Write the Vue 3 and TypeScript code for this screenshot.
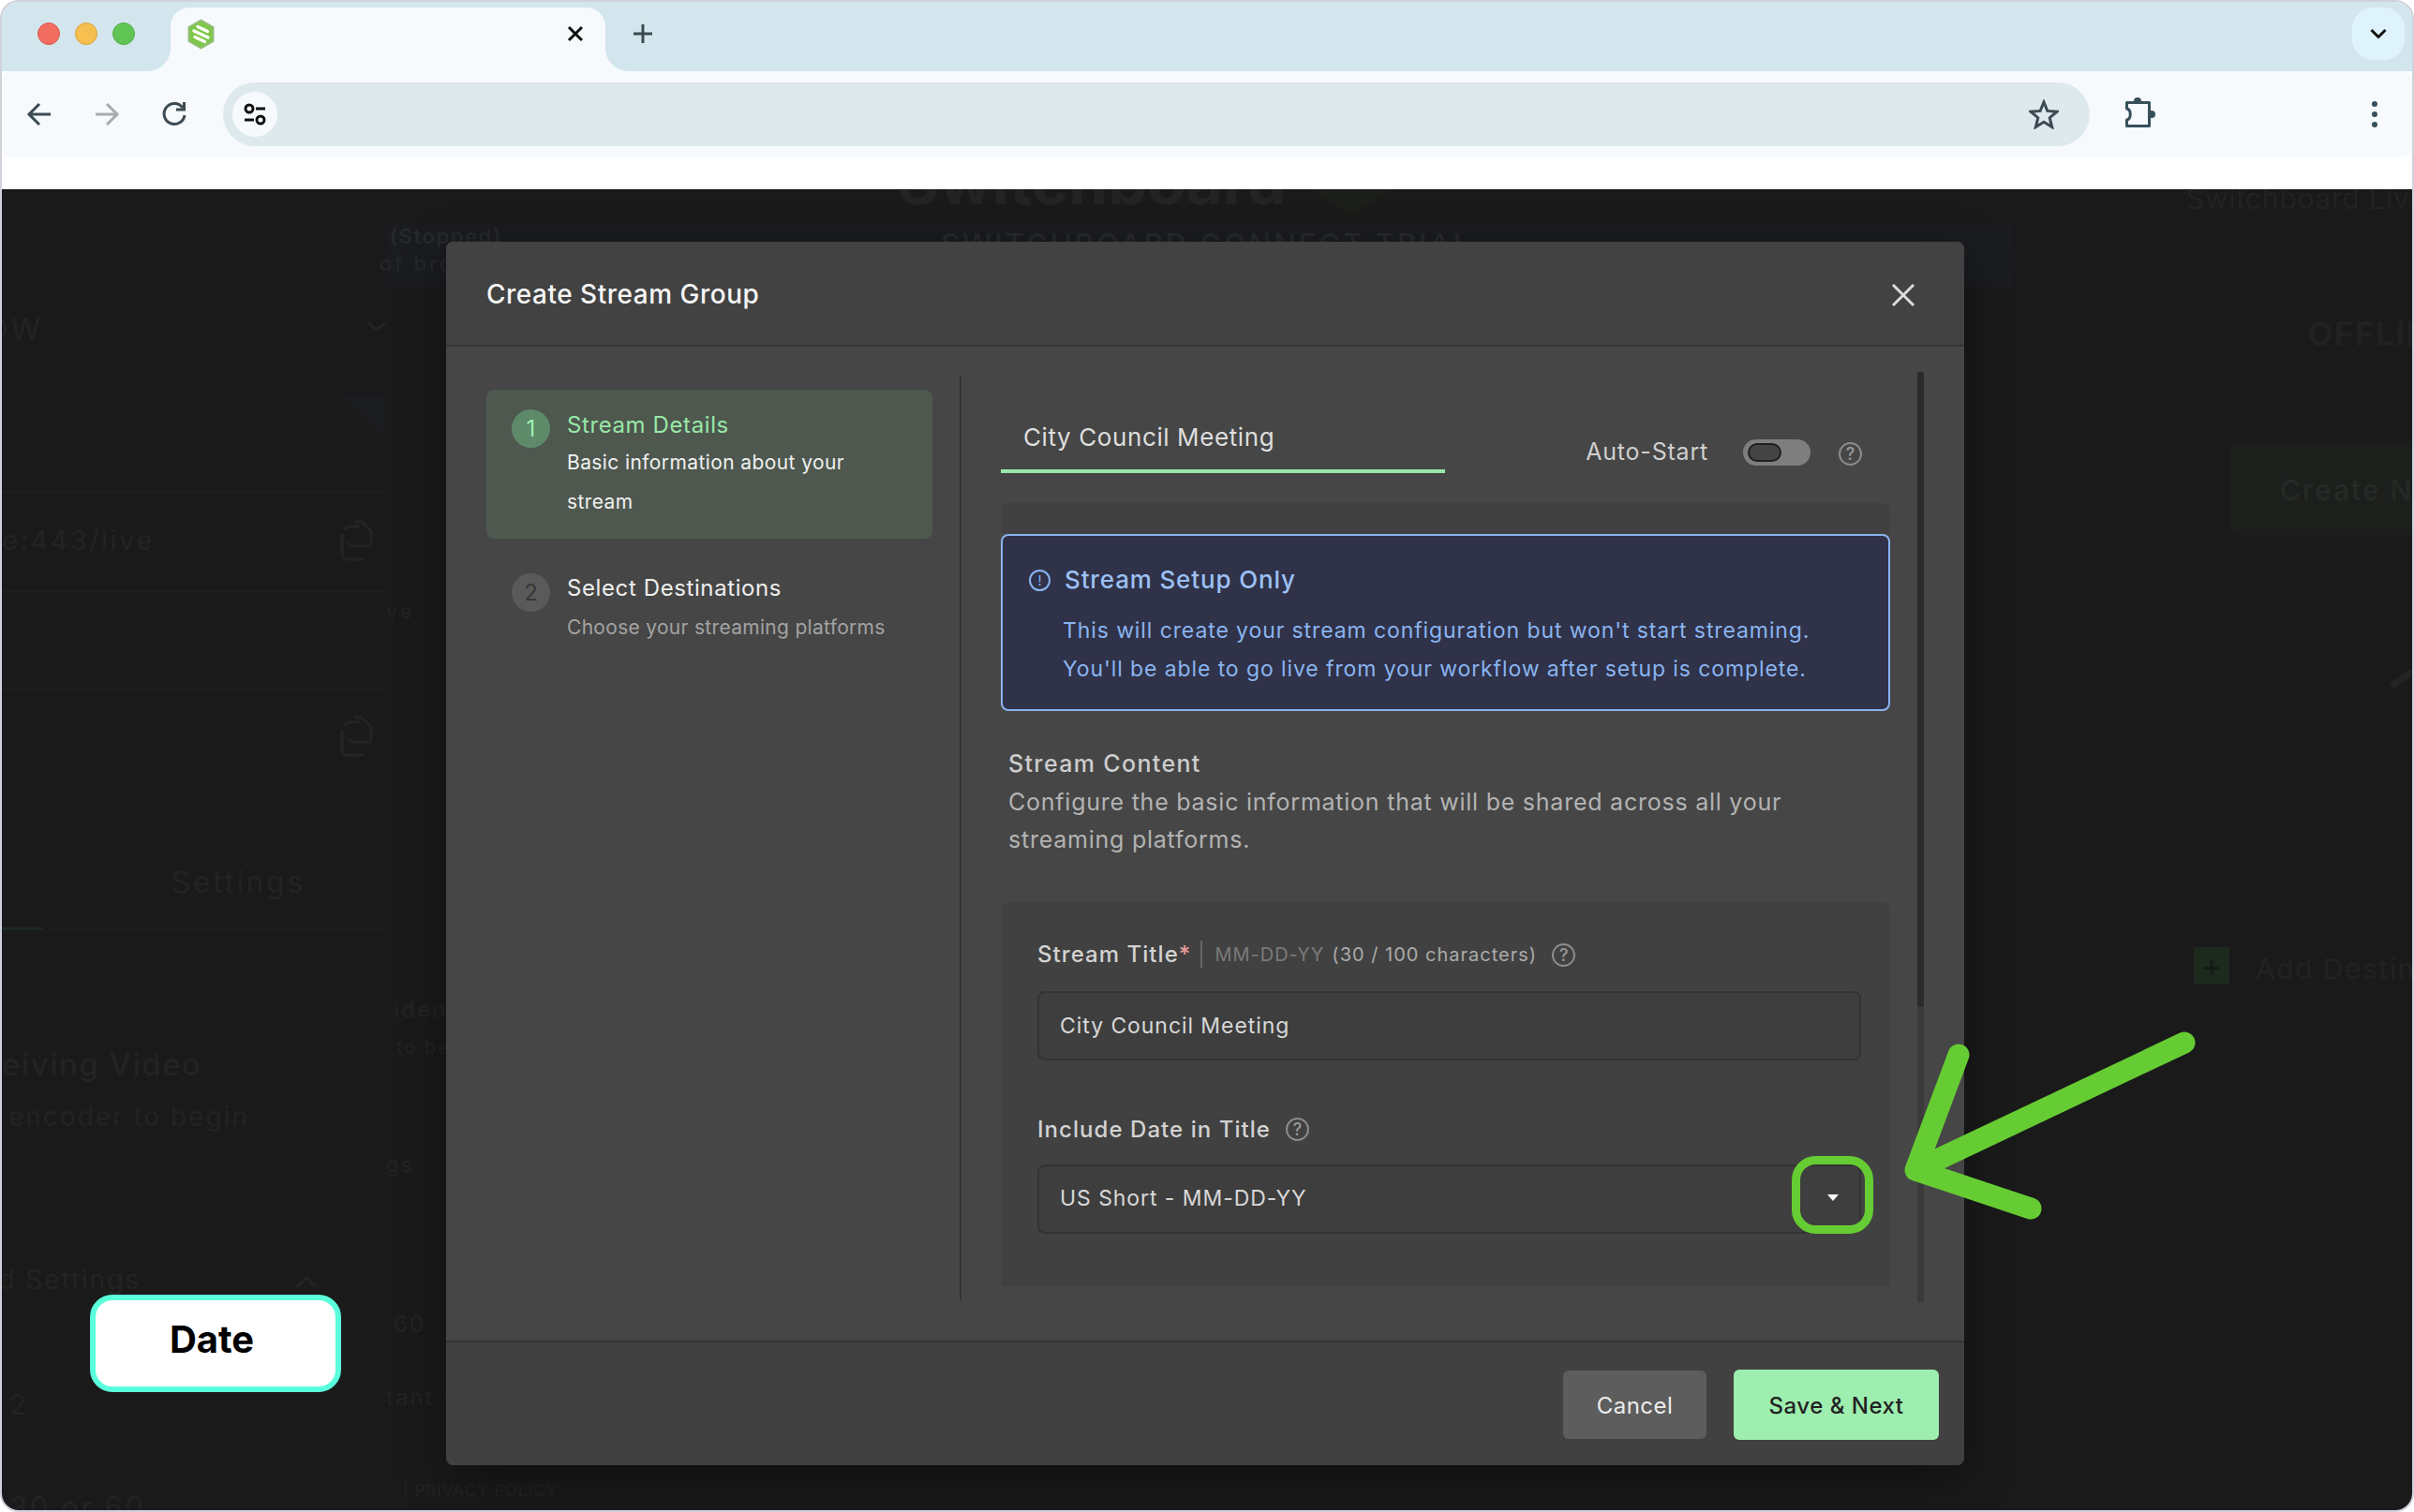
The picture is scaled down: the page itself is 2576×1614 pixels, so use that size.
<script setup lang="ts">
interface Ghost { text: string; x: number; y: number; size: number; weight?: number; color?: string; spacing?: number }
const ghosts: Ghost[] = [
  { text: 'Switchboard', x: 958, y: 194, size: 67, weight: 700, color: '#232323', spacing: 0 },
  { text: '(Stopped)', x: 416, y: 252, size: 22, weight: 600, color: '#26282c', spacing: 1.5 },
  { text: 'of broadcast', x: 405, y: 281, size: 22, color: '#26282c', spacing: 3 },
  { text: 'SWITCHBOARD CONNECT TRIAL', x: 1004, y: 261, size: 31, weight: 500, color: '#27292d', spacing: 3 },
  { text: 'Switchboard Live', x: 2333, y: 212, size: 30, weight: 300, color: '#242424', spacing: 1 },
  { text: 'OFFLINE', x: 2462, y: 356, size: 36, weight: 700, color: '#212121', spacing: 1 },
  { text: 'Create New', x: 2433, y: 523, size: 30, weight: 500, color: '#262a26', spacing: 2 },
  { text: 'Add Destination', x: 2407, y: 1034, size: 30, color: '#222222', spacing: 1.5 },
  { text: 'OW', x: -16, y: 352, size: 32, color: '#232323', spacing: 3 },
  { text: 'e:443/live', x: 2, y: 577, size: 29, color: '#232323', spacing: 2.5 },
  { text: 've', x: 412, y: 652, size: 22, color: '#232323', spacing: 3 },
  { text: 'Settings', x: 183, y: 942, size: 32, color: '#232323', spacing: 2.5 },
  { text: 'eiving Video', x: 2, y: 1136, size: 33, weight: 500, color: '#232323', spacing: 1.5 },
  { text: 'encoder to begin', x: 9, y: 1192, size: 28, color: '#232323', spacing: 2 },
  { text: 'd Settings', x: -2, y: 1366, size: 29, color: '#232323', spacing: 1.5 },
  { text: '2', x: 10, y: 1499, size: 30, color: '#232323' },
  { text: '30 or 60', x: 10, y: 1610, size: 32, color: '#232323', spacing: 2 },
  { text: 'ideo', x: 420, y: 1078, size: 24, weight: 500, color: '#232323', spacing: 2 },
  { text: 'to be', x: 423, y: 1118, size: 20, color: '#232323', spacing: 2 },
  { text: 'gs', x: 412, y: 1243, size: 22, color: '#232323', spacing: 2 },
  { text: '60', x: 420, y: 1414, size: 24, color: '#232323', spacing: 2 },
  { text: 'tant (', x: 412, y: 1492, size: 24, color: '#232323', spacing: 2 },
  { text: '| PRIVACY POLICY', x: 430, y: 1591, size: 17, color: '#232323', spacing: 1 },
]
const ghostStyle = (g: Ghost) => ({
  left: `${g.x - 2}px`,
  top: `${g.y - 202}px`,
  fontSize: `${g.size}px`,
  fontWeight: g.weight ?? 400,
  color: g.color,
  letterSpacing: `${g.spacing ?? 0}px`,
})
const rules = [524, 630, 735, 836, 992]
</script>

<template>
  <div class="window">
    <header class="tabstrip">
      <div class="lights">
        <span class="light red"></span>
        <span class="light yellow"></span>
        <span class="light green"></span>
      </div>
      <div class="tab">
        <svg class="favicon" width="29" height="33" viewBox="0 0 29 33">
          <polygon points="14.5,1.5 27.5,9 27.5,24 14.5,31.5 1.5,24 1.5,9" fill="#7fc74a" stroke="#93bd78" stroke-width="2" stroke-linejoin="round" />
          <path d="M11 8.5 L21.5 13.5 M7 13 L22 20 M8 19.5 L18.5 24.5" stroke="#fff" stroke-width="3.4" stroke-linecap="round" fill="none" />
        </svg>
        <svg class="tab-close" width="18" height="18" viewBox="0 0 18 18">
          <path d="M2 2 L16 16 M16 2 L2 16" stroke="#111" stroke-width="3" fill="none" />
        </svg>
      </div>
      <svg class="new-tab" width="22" height="22" viewBox="0 0 22 22">
        <path d="M11 1 V21 M1 11 H21" stroke="#3c4a52" stroke-width="3" fill="none" />
      </svg>
      <div class="tab-menu">
        <svg width="18" height="12" viewBox="0 0 18 12">
          <path d="M1.5 2 L9 9.5 L16.5 2" stroke="#111" stroke-width="3" fill="none" />
        </svg>
      </div>
    </header>

    <nav class="toolbar">
      <svg class="nav-icon" width="28" height="28" viewBox="0 0 28 28">
        <path d="M26 14 H4 M14 3 L3 14 L14 25" stroke="#3c4a52" stroke-width="3" fill="none" />
      </svg>
      <svg class="nav-icon" width="28" height="28" viewBox="0 0 28 28">
        <path d="M2 14 H24 M14 3 L25 14 L14 25" stroke="#a6abaf" stroke-width="3" fill="none" />
      </svg>
      <svg class="nav-icon" width="28" height="28" viewBox="0 0 28 28">
        <path d="M23 7 A11 11 0 1 0 25 15" stroke="#3c4a52" stroke-width="3" fill="none" />
        <path d="M24.5 1 V9 H16" stroke="#3c4a52" stroke-width="3" fill="none" />
      </svg>
      <div class="omnibox">
        <div class="chip">
          <svg width="26" height="26" viewBox="0 0 26 26">
            <circle cx="7" cy="7" r="4" stroke="#111" stroke-width="3" fill="none" />
            <path d="M14 7 H24 M2 19 H12" stroke="#111" stroke-width="3" fill="none" />
            <circle cx="19" cy="19" r="4" stroke="#111" stroke-width="3" fill="none" />
          </svg>
        </div>
        <svg class="star" width="32" height="32" viewBox="0 0 32 32">
          <polygon points="16,3 19.8,12.4 30,13.2 22.2,19.7 24.7,29.6 16,24.3 7.3,29.6 9.8,19.7 2,13.2 12.2,12.4" stroke="#3c4a52" stroke-width="3" fill="none" />
        </svg>
      </div>
      <svg class="puzzle" width="32" height="32" viewBox="0 0 32 32">
        <circle cx="13" cy="4" r="4" fill="#37505c" />
        <circle cx="28" cy="18" r="4" fill="#37505c" />
        <path d="M1.5 5.5 H25.5 V30.5 H1.5 V24 C6.5 23 6.5 13 1.5 12 Z" stroke="#37505c" stroke-width="3" stroke-linejoin="round" fill="#f6fafd" />
      </svg>
      <div class="dots"><i></i><i></i><i></i></div>
    </nav>

    <div class="white-strip"></div>

    <main class="stage">
      <div class="ghost-layer">
        <div class="ghost-band"></div>
        <div class="ghost-tri"></div>
        <div class="ghost-shield"></div>
        <div class="ghost-btn"></div>
        <div class="ghost-plus">+</div>
        <div class="ghost-tab"></div>
        <div v-for="r in rules" :key="r" class="ghost-rule" :style="{ top: `${r - 202}px` }"></div>
        <svg class="ghost-svg" width="2572" height="1410" viewBox="2 202 2572 1410">
          <g fill="none" stroke="#242424" stroke-width="3">
            <path d="M393 345 L402 352 L411 345" />
            <path d="M317 1374 L327 1364 L337 1374" />
            <path d="M368 566 a4 4 0 0 1 4 -4 h12 M378 557 h8 l10 10 v12 a4 4 0 0 1 -4 4 h-16 a4 4 0 0 1 -4 -4 M365 570 v22 a5 5 0 0 0 5 5 h18" />
            <path d="M368 775 a4 4 0 0 1 4 -4 h12 M378 766 h8 l10 10 v12 a4 4 0 0 1 -4 4 h-16 a4 4 0 0 1 -4 -4 M365 779 v22 a5 5 0 0 0 5 5 h18" />
            <path d="M2552 732 L2576 716" stroke-width="7" />
          </g>
        </svg>
        <span v-for="g in ghosts" :key="g.text + g.y" class="ghost-text" :style="ghostStyle(g)">{{ g.text }}</span>
      </div>

      <div class="overlay">
        <section class="modal">
          <div class="modal-head">
            <h2 class="modal-title">Create Stream Group</h2>
            <svg class="modal-close" width="28" height="28" viewBox="0 0 28 28">
              <path d="M3 3 L25 25 M25 3 L3 25" stroke="#dcdcdc" stroke-width="3" fill="none" />
            </svg>
          </div>

          <div class="modal-body">
            <aside class="stepper">
              <div class="step active">
                <span class="step-num">1</span>
                <div class="step-text">
                  <div class="step-title">Stream Details</div>
                  <div class="step-sub">Basic information about your stream</div>
                </div>
              </div>
              <div class="step idle">
                <span class="step-num">2</span>
                <div class="step-text">
                  <div class="step-title">Select Destinations</div>
                  <div class="step-sub">Choose your streaming platforms</div>
                </div>
              </div>
            </aside>
            <div class="divider"></div>

            <div class="pane">
              <div class="tab-row">
                <div class="group-tab">City Council Meeting</div>
                <div class="auto-start">
                  <span class="auto-label">Auto-Start</span>
                  <span class="toggle"><i></i></span>
                  <span class="help help-auto">?</span>
                </div>
              </div>

              <div class="strip"></div>
              <div class="alert">
                <div class="alert-head">
                  <span class="alert-icon">!</span>
                  <span class="alert-title">Stream Setup Only</span>
                </div>
                <p class="alert-body">This will create your stream configuration but won't start streaming.<br />You'll be able to go live from your workflow after setup is complete.</p>
              </div>

              <div class="section">
                <div class="section-title">Stream Content</div>
                <p class="section-text">Configure the basic information that will be shared across all your streaming platforms.</p>
              </div>

              <div class="card">
                <div class="field-label">
                  <span class="label-main">Stream Title<em>*</em></span>
                  <span class="sep"></span>
                  <span class="hint-dim">MM-DD-YY</span>
                  <span class="hint">(30 / 100 characters)</span>
                  <span class="help">?</span>
                </div>
                <div class="input">City Council Meeting</div>

                <div class="field-label second">
                  <span class="label-main">Include Date in Title</span>
                  <span class="help">?</span>
                </div>
                <div class="input select">
                  <span>US Short - MM-DD-YY</span>
                  <i class="caret"></i>
                </div>
              </div>
            </div>

            <div class="scrollbar"><i></i></div>
          </div>

          <div class="modal-foot">
            <button class="btn cancel">Cancel</button>
            <button class="btn save">Save &amp; Next</button>
          </div>
        </section>
      </div>
    </main>

    <svg class="annotation" width="2576" height="1614" viewBox="0 0 2576 1614">
      <rect x="1916.5" y="1238.5" width="78" height="74" rx="21" fill="none" stroke="#66cc33" stroke-width="9" />
      <path d="M2331 1113 L2044 1249 M2090 1126 L2044 1249 L2167 1290" fill="none" stroke="#66cc33" stroke-width="23" stroke-linecap="round" stroke-linejoin="round" />
    </svg>

    <div class="date-badge"><span>Date</span></div>
  </div>
</template>

<style>
html, body { margin: 0; background: #fff; }
</style>

<style scoped>
.window {
  position: relative;
  width: 2576px;
  height: 1614px;
  box-sizing: border-box;
  border: 2px solid #cfd2da;
  border-radius: 20px;
  overflow: hidden;
  display: flex;
  flex-direction: column;
  background: #fff;
  font-family: Inter, "Liberation Sans", sans-serif;
}

/* browser chrome */
.tabstrip {
  height: 74px;
  flex: none;
  display: flex;
  align-items: flex-start;
  background: #d3e6ed;
}
.lights { display: flex; gap: 16px; padding: 22px 0 0 38px; width: 180px; flex: none; box-sizing: border-box; }
.light { width: 24px; height: 24px; border-radius: 50%; box-sizing: border-box; }
.red { background: #f26d60; border: 1px solid #d85a50; }
.yellow { background: #f6bf4f; border: 1px solid #dca23c; }
.green { background: #61c555; border: 1px solid #4fae45; }
.tab {
  position: relative;
  margin-top: 6px;
  width: 464px;
  height: 68px;
  box-sizing: border-box;
  background: #f6fafd;
  border-radius: 20px 20px 0 0;
  display: flex;
  align-items: flex-start;
  justify-content: space-between;
  padding: 12px 23px 0 18px;
}
.tab::before, .tab::after {
  content: "";
  position: absolute;
  bottom: 0;
  width: 24px;
  height: 24px;
}
.tab::before { left: -24px; background: radial-gradient(circle at 0 0, transparent 23.5px, #f6fafd 24px); }
.tab::after { right: -24px; background: radial-gradient(circle at 100% 0, transparent 23.5px, #f6fafd 24px); }
.tab-close { margin-top: 7px; }
.new-tab { margin: 23px 0 0 29px; }
.tab-menu {
  margin: 6px 8px 0 auto;
  width: 56px;
  height: 56px;
  border-radius: 22px;
  background: #def3fc;
  display: flex;
  align-items: center;
  justify-content: center;
}
.toolbar {
  height: 92px;
  flex: none;
  display: flex;
  align-items: center;
  background: #f6fafd;
  border-radius: 10px;
  padding-left: 26px;
  box-sizing: border-box;
}
.nav-icon { margin-right: 44px; flex: none; }
.toolbar .nav-icon:nth-child(3) { margin-right: 38px; }
.omnibox {
  width: 1992px;
  height: 68px;
  flex: none;
  border-radius: 34px;
  background: #dee9ee;
  display: flex;
  align-items: center;
  justify-content: space-between;
  padding: 0 33px 0 10px;
  box-sizing: border-box;
}
.chip {
  width: 48px;
  height: 48px;
  border-radius: 50%;
  background: #f6fafd;
  display: flex;
  align-items: center;
  justify-content: center;
}
.puzzle { margin: -4px 0 0 38px; flex: none; }
.dots { margin-left: 231px; display: flex; flex-direction: column; gap: 5px; }
.dots i { width: 6px; height: 6px; border-radius: 50%; background: #37505c; display: block; }
.white-strip { height: 34px; flex: none; background: #fff; }

/* dimmed page behind */
.stage {
  position: relative;
  flex: 1;
  background: #1a1a1a;
  overflow: hidden;
}
.ghost-layer { position: absolute; inset: 0; }
.ghost-text { position: absolute; line-height: 0; white-space: nowrap; }
.ghost-svg { position: absolute; left: 0; top: 0; }
.ghost-band { position: absolute; left: 410px; top: 38px; width: 1736px; height: 66px; background: #1a1c20; }
.ghost-tri { position: absolute; left: 361px; top: 220px; width: 49px; height: 48px; background: #1b1c20; clip-path: polygon(0 0, 100% 0, 100% 100%); }
.ghost-shield { position: absolute; left: 1400px; top: -30px; width: 81px; height: 60px; background: #1c1f19; clip-path: polygon(0 0, 100% 0, 100% 50%, 50% 100%, 0 50%); }
.ghost-btn { position: absolute; left: 2377px; top: 269px; width: 210px; height: 100px; border-radius: 10px; background: #1c1f1c; }
.ghost-plus { position: absolute; left: 2339px; top: 809px; width: 38px; height: 39px; background: #1c2a1e; color: #161a16; font-size: 34px; line-height: 39px; text-align: center; }
.ghost-tab { position: absolute; left: 0; top: 788px; width: 43px; height: 4px; background: #1f2a2a; }
.ghost-rule { position: absolute; left: 0; width: 410px; height: 2px; background: #1e1e1e; }

/* modal */
.overlay { position: absolute; inset: 0; padding: 56px 0 0 474px; }
.modal {
  width: 1620px;
  height: 1306px;
  border-radius: 8px;
  background: #464646;
  display: flex;
  flex-direction: column;
  overflow: hidden;
  box-shadow: 0 14px 50px rgba(0, 0, 0, 0.4);
}
.modal-head {
  height: 112px;
  flex: none;
  box-sizing: border-box;
  background: #424242;
  border-bottom: 2px solid #353535;
  display: flex;
  align-items: center;
  justify-content: space-between;
  padding: 2px 51px 0 43px;
}
.modal-title { margin: 0; font-size: 28px; font-weight: 500; color: #f5f5f5; letter-spacing: 0.5px; }
.modal-close { margin-top: 2px; }
.modal-body { flex: 1; display: flex; min-height: 0; }

.stepper { width: 548px; flex: none; box-sizing: border-box; padding: 46px 29px 0 43px; }
.step { display: flex; gap: 18px; padding: 21px 27px; box-sizing: border-box; border-radius: 8px; }
.step.active { background: #4e584f; height: 159px; }
.step.idle { margin-top: 16px; }
.step-num {
  flex: none;
  width: 41px;
  height: 41px;
  border-radius: 50%;
  font-size: 24px;
  line-height: 41px;
  text-align: center;
}
.active .step-num { background: #5f8a6a; color: #9eeeb0; }
.idle .step-num { background: #5a5a5a; color: #383838; }
.step-title { font-size: 24px; line-height: 32px; letter-spacing: 0.6px; }
.active .step-title { color: #98e8a8; margin-top: 1px; }
.idle .step-title { color: #eeeeee; }
.step-sub { font-size: 21px; line-height: 42px; letter-spacing: 0.4px; max-width: 340px; }
.active .step-sub { color: #f0f0f0; margin-top: 3px; }
.idle .step-sub { color: #a3a3a3; margin-top: 5px; max-width: 360px; white-space: nowrap; letter-spacing: 0.3px; }
.divider { width: 2px; flex: none; margin-top: 31px; height: 987px; background: #343434; }

.pane { width: 949px; flex: none; margin: 31px 0 0 42px; height: 1004px; }
.tab-row { display: flex; align-items: flex-end; height: 104px; justify-content: space-between; }
.group-tab {
  width: 474px;
  height: 76px;
  box-sizing: border-box;
  padding: 4px 0 0 24px;
  border-bottom: 4px solid #98e8a8;
  font-size: 26px;
  line-height: 68px;
  letter-spacing: 0.6px;
  color: #dedede;
}
.auto-start { display: flex; align-items: center; margin: 0 30px 8px 0; }
.auto-label { font-size: 25px; line-height: 28px; color: #cfcfcf; letter-spacing: 0.8px; margin-right: 37px; margin-top: -2px; }
.toggle { width: 72px; height: 28px; border-radius: 14px; background: #7e7e7e; position: relative; display: block; margin-right: 30px; }
.toggle i { position: absolute; left: 5px; top: 4px; width: 36px; height: 20px; box-sizing: border-box; border-radius: 10px; background: #444; border: 2px solid #1f1f1f; }
.help {
  width: 25px;
  height: 25px;
  box-sizing: border-box;
  border: 2px solid #8c8c8c;
  border-radius: 50%;
  color: #999;
  font-size: 18px;
  font-weight: 500;
  line-height: 21px;
  text-align: center;
  flex: none;
  display: block;
}
.help-auto { margin-top: 4px; }

.strip { margin-top: 32px; height: 33px; border-radius: 8px 8px 0 0; background: #414141; }
.alert {
  height: 189px;
  box-sizing: border-box;
  border: 2px solid #8ab4f0;
  border-radius: 8px;
  background: #2f3248;
  padding: 27px 28px 0;
}
.alert-head { display: flex; align-items: center; height: 38px; gap: 15px; }
.alert-icon {
  width: 23px;
  height: 23px;
  box-sizing: border-box;
  border: 2px solid #8ab4f0;
  border-radius: 50%;
  color: #8ab4f0;
  font-size: 14px;
  line-height: 19px;
  text-align: center;
  margin-top: 3px;
}
.alert-title { font-size: 26px; font-weight: 500; color: #9cc0f5; letter-spacing: 0.85px; }
.alert-body { margin: 16px 0 0 36px; font-size: 23px; line-height: 41px; color: #8ab4f0; letter-spacing: 0.9px; white-space: nowrap; }

.section { margin: 36px 0 0 8px; }
.section-title { font-size: 25px; line-height: 40px; font-weight: 500; color: #cdcdcd; letter-spacing: 1.35px; }
.section-text { margin: 1px 0 0; font-size: 25px; line-height: 40px; color: #b3b3b3; letter-spacing: 0.76px; width: 900px; }

.card {
  margin-top: 47px;
  height: 410px;
  box-sizing: border-box;
  padding: 36px 31px 0 39px;
  background: #414141;
  border-radius: 8px 8px 0 0;
}
.field-label { display: flex; align-items: center; height: 38px; }
.field-label.second { margin-top: 54px; }
.label-main { font-size: 24px; font-weight: 500; color: #d2d2d2; letter-spacing: 1.05px; }
.label-main em { font-style: normal; color: #e89a9a; }
.sep { width: 2px; height: 29px; background: #666; margin: 0 13px 0 10px; }
.hint-dim { font-size: 20px; color: #7a7a7a; letter-spacing: 1px; margin: 2px 8px 0 0; }
.hint { font-size: 20px; color: #ababab; letter-spacing: 1px; margin: 2px 16px 0 0; }
.hint + .help { margin-top: 2px; }
.label-main + .help { margin-left: 16px; }
.input {
  margin-top: 21px;
  height: 74px;
  box-sizing: border-box;
  border: 2px solid #333;
  border-radius: 8px;
  background: #3e3e3e;
  padding: 0 22px;
  display: flex;
  align-items: center;
  font-size: 23px;
  color: #d8d8d8;
  letter-spacing: 0.93px;
}
.select { margin-top: 19px; justify-content: space-between; padding-bottom: 2px; }
.caret { width: 0; height: 0; border-left: 6px solid transparent; border-right: 6px solid transparent; border-top: 7px solid #fff; margin: -2px 0 0 0; }

.scrollbar { width: 7px; height: 994px; margin: 27px 0 0 29px; background: #3b3b3b; flex: none; border-radius: 3px; }
.scrollbar i { display: block; height: 678px; background: #2a2a2a; border-radius: 3px; }

.modal-foot {
  height: 133px;
  flex: none;
  box-sizing: border-box;
  background: #414141;
  border-top: 2px solid #343434;
  display: flex;
  justify-content: flex-end;
  align-items: flex-start;
  gap: 29px;
  padding: 29px 27px 0 0;
}
.btn {
  font-family: inherit;
  font-size: 24px;
  letter-spacing: 0.5px;
  border: 0;
  border-radius: 6px;
  padding: 0;
}
.cancel { width: 153px; height: 73px; margin-top: 1px; background: #5d5d5d; color: #ececec; padding-top: 2px; }
.save { width: 219px; height: 75px; background: #9eeeb0; color: #222; font-weight: 500; padding-top: 2px; }

/* annotations */
.annotation { position: absolute; left: -2px; top: -2px; pointer-events: none; }
.date-badge {
  position: absolute;
  left: 94px;
  top: 1380px;
  width: 268px;
  height: 104px;
  box-sizing: border-box;
  border: 6px solid #5affdc;
  border-radius: 24px;
  background: #fff;
  display: flex;
  justify-content: center;
  padding: 15px 8px 0 0;
  font-size: 40px;
  font-weight: 700;
  line-height: 54px;
  color: #000;
}
</style>
